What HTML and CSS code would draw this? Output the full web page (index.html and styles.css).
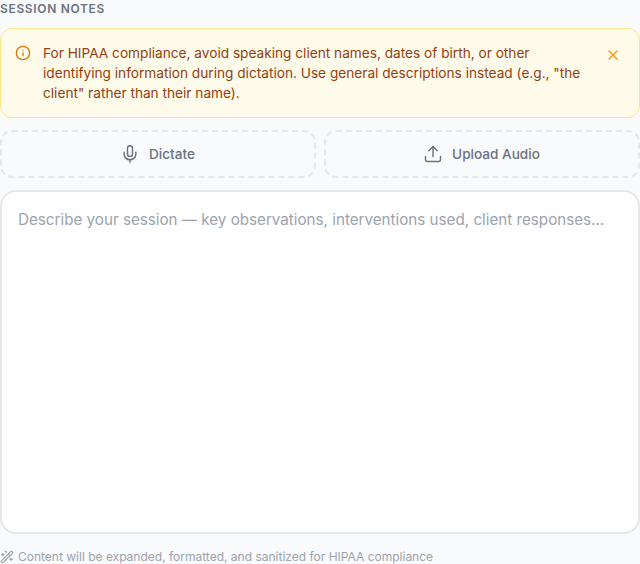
FILE: index.html
```html
<!DOCTYPE html>
<html lang="en">
<head>
<meta charset="utf-8">
<title>Session Notes</title>
<link rel="stylesheet" href="styles.css">
</head>
<body>
<main class="panel">
  <label class="section-label" for="notes">Session Notes</label>
  <div class="alert">
    <svg class="alert-icon" viewBox="0 0 24 24" fill="none" stroke="currentColor" stroke-width="2" stroke-linecap="round" stroke-linejoin="round"><circle cx="12" cy="12" r="10"/><path d="M12 16v-4"/><path d="M12 8h.01"/></svg>
    <p class="alert-text">For HIPAA compliance, avoid speaking client names, dates of birth, or other identifying information during dictation. Use general descriptions instead (e.g., "the client" rather than their name).</p>
    <button class="alert-close" type="button" aria-label="Dismiss">
      <svg viewBox="0 0 24 24" fill="none" stroke="currentColor" stroke-width="2" stroke-linecap="round" stroke-linejoin="round"><path d="M18 6 6 18"/><path d="m6 6 12 12"/></svg>
    </button>
  </div>
  <div class="actions">
    <button class="action" type="button">
      <svg viewBox="0 0 24 24" fill="none" stroke="currentColor" stroke-width="1.75" stroke-linecap="round" stroke-linejoin="round"><path d="M12 2a3 3 0 0 0-3 3v7a3 3 0 0 0 6 0V5a3 3 0 0 0-3-3Z"/><path d="M19 10v2a7 7 0 0 1-14 0v-2"/><path d="M12 19v3"/></svg>
      Dictate
    </button>
    <button class="action" type="button">
      <svg viewBox="0 0 24 24" fill="none" stroke="currentColor" stroke-width="1.75" stroke-linecap="round" stroke-linejoin="round"><path d="M21 15v4a2 2 0 0 1-2 2H5a2 2 0 0 1-2-2v-4"/><path d="m17 8-5-5-5 5"/><path d="M12 3v12"/></svg>
      Upload Audio
    </button>
  </div>
  <textarea class="notes" id="notes" placeholder="Describe your session — key observations, interventions used, client responses..."></textarea>
  <p class="hint">
    <svg viewBox="0 0 24 24" fill="none" stroke="currentColor" stroke-width="2" stroke-linecap="round" stroke-linejoin="round"><path d="m21.64 3.64-1.28-1.28a1.21 1.21 0 0 0-1.72 0L2.36 18.64a1.21 1.21 0 0 0 0 1.72l1.28 1.28a1.2 1.2 0 0 0 1.72 0L21.64 5.36a1.2 1.2 0 0 0 0-1.72"/><path d="m14 7 3 3"/><path d="M5 6v4"/><path d="M19 14v4"/><path d="M10 2v2"/><path d="M7 8H3"/><path d="M21 16h-4"/><path d="M11 3H9"/></svg>
    Content will be expanded, formatted, and sanitized for HIPAA compliance
  </p>
</main>
</body>
</html>
```
FILE: styles.css
```css
* {
  box-sizing: border-box;
}

html,
body {
  margin: 0;
  height: 564px;
  overflow: hidden;
  background: #f9fafb;
  font-family: Inter, "Liberation Sans", sans-serif;
}

.panel {
  display: flex;
  flex-direction: column;
  width: 640px;
}

.section-label {
  display: block;
  height: 28px;
  padding-top: 1px;
  font-size: 12px;
  line-height: 16px;
  font-weight: 600;
  letter-spacing: 0.66px;
  text-transform: uppercase;
  color: #6b7280;
}

.alert {
  display: flex;
  align-items: flex-start;
  gap: 12px;
  height: 90px;
  padding: 15px 18px 14px 14px;
  border: 1px solid #fde68a;
  border-radius: 12px;
  background: #fffbeb;
}

.alert-icon {
  flex: none;
  width: 16px;
  height: 16px;
  margin-top: 1px;
  color: #d97706;
}

.alert-text {
  flex: 1;
  margin: -1px 0 0;
  font-size: 13.67px;
  line-height: 20px;
  color: #92400e;
}

.alert-close {
  flex: none;
  display: flex;
  width: 16px;
  height: 16px;
  margin-top: 3px;
  padding: 0;
  border: 0;
  background: none;
  color: #f59e0b;
}

.alert-close svg {
  width: 16px;
  height: 16px;
}

.actions {
  display: grid;
  grid-template-columns: 1fr 1fr;
  gap: 8px;
  margin-top: 12px;
}

.action {
  display: flex;
  align-items: center;
  justify-content: center;
  gap: 8px;
  height: 48px;
  padding: 0;
  border: 2px dashed #e5e7eb;
  border-radius: 12px;
  background: transparent;
  font-family: inherit;
  font-size: 13.6px;
  font-weight: 500;
  color: #6b7280;
}

.action svg {
  width: 20px;
  height: 20px;
  margin: 0 1px 0 -1px;
}

.notes {
  display: block;
  width: 100%;
  height: 344px;
  margin-top: 12px;
  padding: 16px;
  border: 2px solid #e5e7eb;
  border-radius: 16px;
  outline: 0;
  resize: none;
  background: #fff;
  font-family: inherit;
  font-size: 15.2px;
  line-height: 24px;
  color: #111827;
}

.notes::placeholder {
  color: #9ca3af;
  opacity: 1;
}

.hint {
  display: flex;
  align-items: center;
  gap: 4px;
  margin: 15px 0 0;
  font-size: 12px;
  line-height: 16px;
  color: #9ca3af;
}

.hint svg {
  flex: none;
  width: 14px;
  height: 14px;
}
```
